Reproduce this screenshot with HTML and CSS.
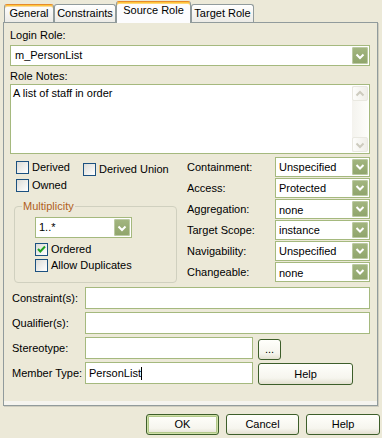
FILE: index.html
```html
<!DOCTYPE html>
<html>
<head>
<meta charset="utf-8">
<title>Source Role</title>
<link rel="stylesheet" href="styles.css">
</head>
<body>
<div class="dialog">
  <div class="tabs">
    <div class="tab hot tab-general">General</div>
    <div class="tab tab-constraints">Constraints</div>
    <div class="tab active tab-source">Source Role</div>
    <div class="tab tab-target">Target Role</div>
  </div>
  <div class="page">
    <div class="label">Login Role:</div>
    <div class="combo combo-login">
      <span class="value">m_PersonList</span>
      <span class="drop"><svg width="14" height="16" viewBox="0 0 14 16"><path d="M3.5 6.5l3.5 3.5 3.5-3.5" fill="none" stroke="#fff" stroke-width="2"/></svg></span>
    </div>
    <div class="label notes-label">Role Notes:</div>
    <div class="notes">
      <div class="notes-text">A list of staff in order</div>
      <div class="vscroll">
        <span class="sbtn"><svg width="14" height="14" viewBox="0 0 14 14"><path d="M3.5 8.5l3.5-3.5 3.5 3.5" fill="none" stroke="#CDCBBE" stroke-width="2"/></svg></span>
        <span class="sbtn"><svg width="14" height="14" viewBox="0 0 14 14"><path d="M3.5 5.5l3.5 3.5 3.5-3.5" fill="none" stroke="#CDCBBE" stroke-width="2"/></svg></span>
      </div>
    </div>

    <div class="middle">
      <div class="left">
        <div class="checkrow">
          <label class="check check-derived"><span class="box"></span><span>Derived</span></label>
          <label class="check check-union"><span class="box"></span><span>Derived Union</span></label>
        </div>
        <label class="check check-owned"><span class="box"></span><span>Owned</span></label>
        <fieldset class="group">
          <legend>Multiplicity</legend>
          <div class="combo combo-mult">
            <span class="value">1..*</span>
            <span class="drop"><svg width="14" height="16" viewBox="0 0 14 16"><path d="M3.5 6.5l3.5 3.5 3.5-3.5" fill="none" stroke="#fff" stroke-width="2"/></svg></span>
          </div>
          <label class="check check-ordered"><span class="box"><svg width="11" height="11" viewBox="0 0 11 11"><path d="M2 5l2.3 2.5L9 2.5" fill="none" stroke="#21A121" stroke-width="2"/></svg></span><span>Ordered</span></label>
          <label class="check check-dups"><span class="box"></span><span>Allow Duplicates</span></label>
        </fieldset>
      </div>
      <div class="props">
        <span class="plabel">Containment:</span>
        <div class="combo"><span class="value">Unspecified</span><span class="drop"><svg width="14" height="16" viewBox="0 0 14 16"><path d="M3.5 6l3.5 3.5 3.5-3.5" fill="none" stroke="#fff" stroke-width="2"/></svg></span></div>
        <span class="plabel">Access:</span>
        <div class="combo"><span class="value">Protected</span><span class="drop"><svg width="14" height="16" viewBox="0 0 14 16"><path d="M3.5 6l3.5 3.5 3.5-3.5" fill="none" stroke="#fff" stroke-width="2"/></svg></span></div>
        <span class="plabel">Aggregation:</span>
        <div class="combo"><span class="value low">none</span><span class="drop"><svg width="14" height="16" viewBox="0 0 14 16"><path d="M3.5 6l3.5 3.5 3.5-3.5" fill="none" stroke="#fff" stroke-width="2"/></svg></span></div>
        <span class="plabel">Target Scope:</span>
        <div class="combo"><span class="value">instance</span><span class="drop"><svg width="14" height="16" viewBox="0 0 14 16"><path d="M3.5 6l3.5 3.5 3.5-3.5" fill="none" stroke="#fff" stroke-width="2"/></svg></span></div>
        <span class="plabel">Navigability:</span>
        <div class="combo"><span class="value">Unspecified</span><span class="drop"><svg width="14" height="16" viewBox="0 0 14 16"><path d="M3.5 6l3.5 3.5 3.5-3.5" fill="none" stroke="#fff" stroke-width="2"/></svg></span></div>
        <span class="plabel">Changeable:</span>
        <div class="combo"><span class="value low">none</span><span class="drop"><svg width="14" height="16" viewBox="0 0 14 16"><path d="M3.5 6l3.5 3.5 3.5-3.5" fill="none" stroke="#fff" stroke-width="2"/></svg></span></div>
      </div>
    </div>

    <div class="fields">
      <span class="flabel">Constraint(s):</span>
      <div class="input wide"></div>
      <span class="flabel">Qualifier(s):</span>
      <div class="input wide"></div>
      <span class="flabel">Stereotype:</span>
      <div class="input"></div>
      <button class="btn btn-dots">...</button>
      <span class="flabel">Member Type:</span>
      <div class="input">PersonList<span class="caret"></span></div>
      <button class="btn btn-help">Help</button>
    </div>
  </div>
  <div class="buttons">
    <button class="btn btn-default">OK</button>
    <button class="btn">Cancel</button>
    <button class="btn btn-wide">Help</button>
  </div>
</div>
</body>
</html>
```
FILE: styles.css
```css
* { box-sizing: border-box; }
html, body { margin: 0; padding: 0; }
body {
  width: 382px;
  height: 438px;
  overflow: hidden;
  background: #ECE9D8;
  font-family: "Liberation Sans", Arial, sans-serif;
  font-size: 11px;
  line-height: 13px;
  color: #000;
}
.dialog { padding: 0 4px 0 3px; }

/* tabs */
.tabs {
  display: flex;
  align-items: flex-end;
  height: 22px;
  padding-left: 1px;
}
.tab {
  height: 18px;
  padding-top: 2px;
  text-align: center;
  white-space: nowrap;
  border: 1px solid #919B9C;
  border-bottom: none;
  border-radius: 3px 3px 0 0;
  background: linear-gradient(#FFFFFF, #ECEBE6);
}
.tab-general { width: 50px; }
.tab-constraints { width: 62px; }
.tab-source { width: 75px; }
.tab-target { width: 63px; }
.tab.hot {
  border-top-color: #E68B2C;
  box-shadow: inset 0 1px 0 #FFC73C, inset 0 2px 0 #F8D9A0;
}
.tab.active {
  height: 22px;
  margin-bottom: -1px;
  position: relative;
  z-index: 1;
  background: #FCFCFE;
  border-top-color: #E68B2C;
  box-shadow: inset 0 1px 0 #FFC73C, inset 0 2px 0 #FFD77A;
}

/* page */
.page {
  height: 384px;
  border: 1px solid #919B9C;
  background: #ECE9D8;
  padding: 6px 7px 0 6px;
  box-shadow: inset 0 -4px 0 #F5F4EF, 1px 1px 0 #CFCDBF;
}
.label { height: 13px; white-space: nowrap; }
.notes-label { margin-top: 4px; }

/* combo */
.combo {
  display: flex;
  height: 20px;
  padding: 1px;
  border: 1px solid #A5B97E;
  background: #fff;
}
.combo .value {
  flex: 1;
  padding-left: 2px;
  align-self: center;
  white-space: nowrap;
}
.combo .value.low { padding-top: 2px; }
.combo .drop {
  width: 16px;
  display: flex;
  align-items: center;
  justify-content: center;
  border-radius: 2px;
  background: linear-gradient(#A3B680, #8FA46B);
  box-shadow: inset 0 0 0 1px #BCCAA3;
}
.combo-login { height: 21px; margin-top: 3px; }
.combo-login .value { padding-left: 3px; }

/* notes */
.notes {
  display: flex;
  height: 70px;
  margin-top: 1px;
  border: 1px solid #A5B97E;
  background: #fff;
}
.notes-text { flex: 1; padding: 2px 2px; }
.vscroll {
  width: 16px;
  margin: 1px 1px 1px 0;
  display: flex;
  flex-direction: column;
  justify-content: space-between;
  background: linear-gradient(to right, #F4F3EE, #FDFDFA);
}
.sbtn {
  height: 15px;
  display: flex;
  align-items: center;
  justify-content: center;
  border: 1px solid #E9E8E0;
  border-radius: 2px;
  background: linear-gradient(to right, #FDFDFB, #EFEEE8);
}

/* middle */
.middle {
  display: flex;
  margin-top: 3px;
  height: 126px;
}
.left {
  width: 177px;
  padding-top: 4px;
}
.checkrow { display: flex; height: 13px; padding-left: 6px; }
.check {
  display: flex;
  align-items: center;
  gap: 3px;
  height: 13px;
  white-space: nowrap;
}
.check .box {
  width: 13px;
  height: 13px;
  flex: none;
  display: flex;
  align-items: center;
  justify-content: center;
  border: 1px solid #1C5180;
  background: linear-gradient(135deg, #DCDCD7, #FFFFFF);
}
.check-derived { width: 67px; }
.check-union { margin-top: 2px; }
.check-owned { margin: 5px 0 0 6px; }

.group {
  margin: 8px 0 0 4px;
  width: 163px;
  height: 83px;
  padding: 4px 0 0 20px;
  border: 1px solid #D0D0BF;
  border-radius: 4px;
}
.group legend {
  margin-left: -13px;
  padding: 0 1px;
  color: #B0601C;
  line-height: 13px;
}
.combo-mult { width: 97px; height: 21px; }
.check-ordered { margin-top: 5px; }
.check-dups { margin-top: 3px; }

.props {
  display: grid;
  grid-template-columns: 88px 95px;
  grid-auto-rows: 21px;
}
.plabel { align-self: center; padding-bottom: 1px; white-space: nowrap; }

/* fields */
.fields {
  display: grid;
  grid-template-columns: 75px 168px 117px;
  grid-auto-rows: 22px;
  row-gap: 3px;
  margin-top: 4px;
}
.flabel { align-self: center; padding-left: 2px; white-space: nowrap; }
.input {
  border: 1px solid #A5B97E;
  background: #fff;
  padding: 4px 3px 0;
  white-space: nowrap;
}
.input.wide { grid-column: 2 / 4; }
.caret {
  display: inline-block;
  width: 1px;
  height: 13px;
  background: #000;
  vertical-align: top;
}

/* buttons */
.btn {
  font-family: inherit;
  font-size: 11px;
  line-height: 13px;
  color: #000;
  height: 21px;
  width: 73px;
  padding: 0;
  border: 1px solid #3D5E2A;
  border-radius: 3px;
  background: linear-gradient(#FFFFFB, #F6F5EE 70%, #E3E0D0);
}
.btn-dots { width: 23px; height: 21px; margin: 2px 0 0 5px; }
.btn-help { width: 95px; height: 22px; margin: 1px 0 0 5px; }
.btn-default {
  box-shadow: inset 0 0 0 1px #CFE0A8, inset 0 0 0 2px #B2C98A;
}
.btn-wide { width: 74px; }
.buttons {
  display: flex;
  justify-content: flex-end;
  gap: 7px;
  margin: 8px -2px 0 0;
}
```
